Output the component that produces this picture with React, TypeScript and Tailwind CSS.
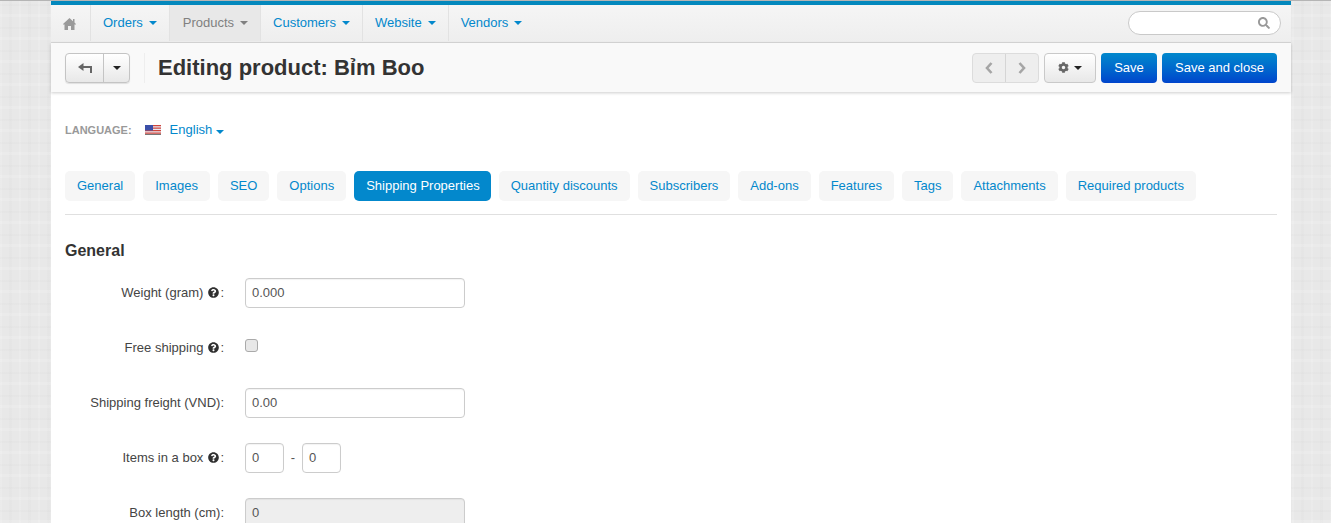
import React from "react";
import { FaSearch, FaCog, FaQuestionCircle } from "react-icons/fa";

const navItems = [
  { label: "Orders", pad: "px-[12px]" },
  { label: "Products", active: true, pad: "pl-[13px] pr-[12px]" },
  { label: "Customers", pad: "px-[12px]" },
  { label: "Website", pad: "px-[12px]" },
  { label: "Vendors", pad: "px-[12px]", last: true },
];

const tabs = [
  "General",
  "Images",
  "SEO",
  "Options",
  "Shipping Properties",
  "Quantity discounts",
  "Subscribers",
  "Add-ons",
  "Features",
  "Tags",
  "Attachments",
  "Required products",
];

const Caret = ({ color = "border-t-[#0388cc]" }: { color?: string }) => (
  <span className={`inline-block w-0 h-0 border-x-[4px] border-x-transparent border-t-[4px] ${color}`} />
);

const Hint = () => <FaQuestionCircle className="inline-block text-[#2f2f2f] w-[11px] h-[11px] ml-[5px] mr-[1px]" />;

const Row = ({ label, hint, children }: { label: string; hint?: boolean; children: React.ReactNode }) => (
  <div className="flex h-[30px] mb-[25px]">
    <div className="w-[160px] pt-[6px] pr-[1px] text-right text-[13px] leading-[17px] text-[#444] shrink-0 flex justify-end items-start">
      <span>{label}</span>
      {hint && <span className="mt-[2px] h-[13px] flex items-center"><Hint /></span>}
      <span>:</span>
    </div>
    <div className="ml-[20px]">{children}</div>
  </div>
);

const Field = ({ value, w = "w-[220px]", disabled }: { value: string; w?: string; disabled?: boolean }) => (
  <div
    className={`${w} h-[30px] px-[6px] flex items-center text-[13px] text-[#555] border border-[#ccc] rounded-[4px] shadow-[inset_0_1px_1px_rgba(0,0,0,0.05)] ${disabled ? "bg-[#eee]" : "bg-white"}`}
  >
    {value}
  </div>
);

export default function App() {
  return (
    <div className="h-[523px] overflow-hidden bg-[#e8e8e8] border-t border-t-[#b5b5b5] bg-[repeating-linear-gradient(0deg,rgba(255,255,255,0.14)_0_3px,transparent_3px_11px,rgba(0,0,0,0.012)_11px_13px,transparent_13px_23px),repeating-linear-gradient(90deg,rgba(255,255,255,0.12)_0_2px,transparent_2px_9px,rgba(0,0,0,0.012)_9px_12px,transparent_12px_19px)] pl-[51px] font-['Liberation_Sans',Arial,sans-serif]">
      <div className="w-[1240px] h-full bg-white">
        <div className="h-[4px] bg-[#0388bd]" />
        <nav className="h-[38px] flex bg-gradient-to-b from-[#f5f5f5] to-[#eeeeee] border-b border-[#d8d8d8]">
          <div className="w-[40px] mb-[1px] pb-[1px] flex items-center justify-center border-r border-[#e2e2e2] text-[#9a9a9a]">
            <svg viewBox="0 0 13 12" className="w-[13px] h-[12px] -ml-[2px] mt-[2px]" fill="currentColor">
              <path d="M6.5 0 L10 3.2 V1 H11.5 V4.6 L13 6 V6.5 H11.5 V12 H8 V8 H5 V12 H1.5 V6.5 H0 V6 Z" />
            </svg>
          </div>
          {navItems.map((item) => (
            <div
              key={item.label}
              className={`${item.pad} mb-[1px] pb-[1px] flex items-center gap-[6px] text-[13px] ${item.last ? "" : "border-r border-[#e2e2e2]"} ${item.active ? "bg-[#e8e8e8] text-[#808080]" : "text-[#0388cc]"}`}
            >
              {item.label}
              <Caret color={item.active ? "border-t-[#808080]" : "border-t-[#0388cc]"} />
            </div>
          ))}
          <div className="ml-auto mr-[10px] mt-[6px] w-[153px] h-[24px] rounded-full bg-white border border-[#c9c9c9] flex items-center justify-end pr-[10px] text-[#999]">
            <FaSearch className="w-[12px] h-[12px]" />
          </div>
        </nav>
        <div className="h-[49px] px-[14px] flex items-center bg-[#f9f9f9] shadow-[0_1px_3px_rgba(0,0,0,0.2)] relative">
          <div className="flex h-[30px] border border-[#c4c4c4] rounded-[4px] bg-gradient-to-b from-white to-[#e8e8e8] shadow-[0_1px_1px_rgba(0,0,0,0.1)]">
            <div className="w-[38px] flex items-center justify-center border-r border-[#c4c4c4] text-[#666]">
              <svg viewBox="0 0 14 10" className="w-[14px] h-[10px]" fill="currentColor">
                <path d="M0 4 L5.5 0 V3 H14 V10 H12 V5 H5.5 V8 Z" />
              </svg>
            </div>
            <div className="w-[25px] flex items-center justify-center">
              <Caret color="border-t-[#222]" />
            </div>
          </div>
          <div className="ml-[14px] h-[30px] border-l border-[#eeeeee] pl-[13px] flex items-center text-[22px] font-bold text-[#333]">
            Editing product: Bỉm Boo
          </div>
          <div className="ml-auto flex items-center">
            <div className="flex h-[30px] border border-[#dcdcdc] rounded-[4px] bg-[#eeeeee] text-[#a5a5a5]">
              <div className="w-[33px] flex items-center justify-center border-r border-[#d5d5d5]">
                <svg viewBox="0 0 8 12" className="w-[8px] h-[12px]" fill="none" stroke="currentColor" strokeWidth="2.6">
                  <path d="M6.5 1 L2 6 L6.5 11" />
                </svg>
              </div>
              <div className="w-[32px] flex items-center justify-center">
                <svg viewBox="0 0 8 12" className="w-[8px] h-[12px]" fill="none" stroke="currentColor" strokeWidth="2.6">
                  <path d="M1.5 1 L6 6 L1.5 11" />
                </svg>
              </div>
            </div>
            <div className="ml-[5px] w-[52px] h-[30px] flex items-center justify-center gap-[5px] border border-[#c9c9c9] rounded-[4px] bg-gradient-to-b from-white to-[#e8e8e8] text-[#666]">
              <FaCog className="w-[11px] h-[11px]" />
              <Caret color="border-t-[#222]" />
            </div>
            <div className="ml-[5px] w-[56px] h-[30px] flex items-center justify-center rounded-[4px] bg-gradient-to-b from-[#0388cc] to-[#0044cc] text-white text-[13px]">
              Save
            </div>
            <div className="ml-[5px] w-[115px] h-[30px] flex items-center justify-center rounded-[4px] bg-gradient-to-b from-[#0388cc] to-[#0044cc] text-white text-[13px]">
              Save and close
            </div>
          </div>
        </div>

        <div className="px-[14px]">
          <div className="mt-[29px] h-[18px] flex items-center">
            <span className="mt-[1px] text-[11px] font-bold text-[#999]">LANGUAGE:</span>
            <svg viewBox="0 0 16 10" className="ml-[13px] w-[16px] h-[10px]">
              <rect width="16" height="10" fill="#e8e8f0" />
              <path d="M0 0h16v1.2H0zM0 2.5h16v1.2H0zM0 5h16v1.2H0zM0 7.5h16v1.2H0z" fill="#d0453c" />
              <rect width="8" height="5.5" fill="#3b4fa8" />
              <rect y="9" width="16" height="1" fill="#777" />
            </svg>
            <span className="ml-[9px] text-[13px] text-[#0388cc]">English</span>
            <span className="ml-[4px] mb-[3px]"><Caret /></span>
          </div>

          <div className="mt-[32px] pb-[13px] flex gap-[8px] border-b border-[#e0e0e0]">
            {tabs.map((t) => (
              <div
                key={t}
                className={`h-[30px] flex items-center rounded-[5px] text-[13px] ${t === "Shipping Properties" ? "pl-[12px] pr-[11px] bg-[#0388cc] text-white" : "px-[12px] bg-[#f6f6f6] text-[#0388cc]"}`}
              >
                {t}
              </div>
            ))}
          </div>

          <h3 className="mt-[27px] mb-[18px] text-[16px] leading-[18px] font-bold text-[#333]">General</h3>

          <Row label="Weight (gram)" hint>
            <Field value="0.000" />
          </Row>
          <Row label="Free shipping" hint>
            <div className="mt-[6px] w-[13px] h-[13px] rounded-[3px] border border-[#aaa] bg-[#e8e8e8]" />
          </Row>
          <Row label="Shipping freight (VND)">
            <Field value="0.00" />
          </Row>
          <Row label="Items in a box" hint>
            <div className="flex items-center">
              <Field value="0" w="w-[39px]" />
              <span className="w-[18px] text-center text-[13px] text-[#555]">-</span>
              <Field value="0" w="w-[39px]" />
            </div>
          </Row>
          <Row label="Box length (cm)">
            <Field value="0" disabled />
          </Row>
        </div>
      </div>
    </div>
  );
}
